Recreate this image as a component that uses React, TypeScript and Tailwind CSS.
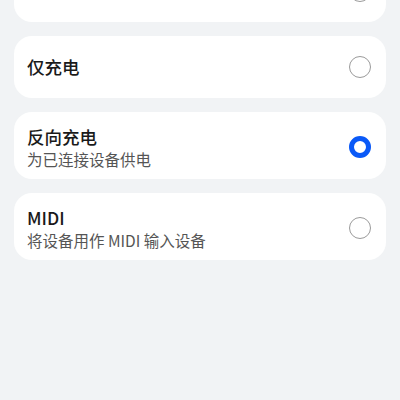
import React, { useState } from "react";

type Option = {
  id: string;
  title: string;
  subtitle?: string;
};

const options: Option[] = [
  { id: "files", title: "传输文件" },
  { id: "charge", title: "仅充电" },
  { id: "reverse", title: "反向充电", subtitle: "为已连接设备供电" },
  { id: "midi", title: "MIDI", subtitle: "将设备用作 MIDI 输入设备" },
];

function Radio({ checked }: { checked: boolean }) {
  if (checked) {
    return <div className="w-[22px] h-[22px] shrink-0 rounded-full border-[5.5px] border-[#0a59f7] bg-white" />;
  }
  return <div className="w-[22px] h-[22px] shrink-0 rounded-full border-[1.5px] border-[#9a9a9a] bg-white" />;
}

export default function App() {
  const [selected, setSelected] = useState("reverse");

  return (
    <div
      className="w-[400px] h-[400px] overflow-hidden bg-[#f1f3f5]"
      style={{ fontFamily: '"Noto Sans CJK SC", "Noto Sans", sans-serif' }}
    >
      <div className="-mt-[40px] px-[14px] flex flex-col gap-[14px]">
        {options.map((o) => (
          <button
            key={o.id}
            onClick={() => setSelected(o.id)}
            className={
              o.subtitle
                ? "flex items-center justify-between bg-white rounded-[18px] pl-[13px] pr-[15px] pt-[13px] pb-[10px] text-left"
                : "flex items-center justify-between bg-white rounded-[18px] pl-[13px] pr-[15px] h-[62px] text-left"
            }
          >
            <div className="flex flex-col">
              <span className="text-[17.5px] leading-[24px] font-medium text-[#1a1a1a]">{o.title}</span>
              {o.subtitle && (
                <span className="text-[15.5px] leading-[20px] text-[#555555]">{o.subtitle}</span>
              )}
            </div>
            <Radio checked={selected === o.id} />
          </button>
        ))}
      </div>
    </div>
  );
}
